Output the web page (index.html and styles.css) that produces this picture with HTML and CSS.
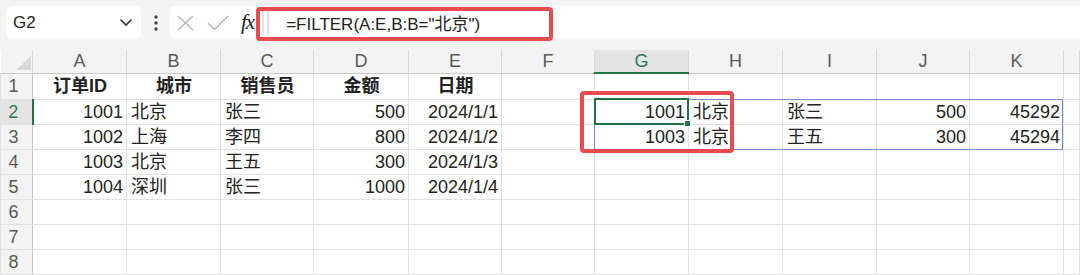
FILE: index.html
```html
<!DOCTYPE html>
<html lang="zh-CN">
<head>
    <meta charset="UTF-8">
    <meta name="viewport" content="width=device-width, initial-scale=1.0">
    <title>FILTER 示例</title>
    <link rel="stylesheet" href="styles.css">
</head>
<body>
    <div class="app">
        <!-- Name box + formula bar -->
        <div class="toolbar">
            <div class="name-box">
                <span>G2</span>
                <svg width="14" height="9" viewBox="0 0 14 9"><polyline points="1.5,1.5 7,7 12.5,1.5" fill="none" stroke="#333" stroke-width="1.6"/></svg>
            </div>
            <div class="more">
                <svg width="4" height="16" viewBox="0 0 4 16"><circle cx="2" cy="2" r="1.7" fill="#444"/><circle cx="2" cy="8" r="1.7" fill="#444"/><circle cx="2" cy="14" r="1.7" fill="#444"/></svg>
            </div>
            <div class="formula-box">
                <svg class="fx-btn cancel" width="17" height="16" viewBox="0 0 17 16"><path d="M1 1 L16 15 M16 1 L1 15" stroke="#b9b9b9" stroke-width="1.6" fill="none"/></svg>
                <svg class="fx-btn enter" width="22" height="16" viewBox="0 0 22 16"><polyline points="1,8 7.5,14.5 21,1" stroke="#b9b9b9" stroke-width="1.6" fill="none"/></svg>
                <i class="fx">fx</i>
                <span class="grip"></span>
                <span class="formula">=FILTER(A:E,B:B="北京")</span>
            </div>
        </div>

        <!-- Worksheet -->
        <div class="sheet">
            <table class="grid">
                <colgroup>
                    <col class="c-rh">
                    <col class="c94"><col class="c94"><col class="c93"><col class="c95"><col class="c93">
                    <col class="c93"><col class="c94"><col class="c94"><col class="c94"><col class="c93">
                    <col class="c94"><col>
                </colgroup>
                <tr class="col-heads">
                    <th class="corner"><span class="tri"></span></th>
                    <th>A</th><th>B</th><th>C</th><th>D</th><th>E</th><th>F</th>
                    <th class="sel">G</th><th>H</th><th>I</th><th>J</th><th>K</th><th></th>
                </tr>
                <tr class="first">
                    <td class="rh">1</td>
                    <td class="hd">订单ID</td><td class="hd">城市</td><td class="hd">销售员</td><td class="hd">金额</td><td class="hd">日期</td>
                    <td></td><td></td><td></td><td></td><td></td><td></td><td></td>
                </tr>
                <tr>
                    <td class="rh sel">2</td>
                    <td class="num">1001</td><td>北京</td><td>张三</td><td class="num">500</td><td class="num">2024/1/1</td>
                    <td></td>
                    <td class="num">1001</td><td>北京</td><td>张三</td><td class="num">500</td><td class="num">45292</td><td></td>
                </tr>
                <tr>
                    <td class="rh">3</td>
                    <td class="num">1002</td><td>上海</td><td>李四</td><td class="num">800</td><td class="num">2024/1/2</td>
                    <td></td>
                    <td class="num">1003</td><td>北京</td><td>王五</td><td class="num">300</td><td class="num">45294</td><td></td>
                </tr>
                <tr>
                    <td class="rh">4</td>
                    <td class="num">1003</td><td>北京</td><td>王五</td><td class="num">300</td><td class="num">2024/1/3</td>
                    <td></td><td></td><td></td><td></td><td></td><td></td><td></td>
                </tr>
                <tr>
                    <td class="rh">5</td>
                    <td class="num">1004</td><td>深圳</td><td>张三</td><td class="num">1000</td><td class="num">2024/1/4</td>
                    <td></td><td></td><td></td><td></td><td></td><td></td><td></td>
                </tr>
                <tr>
                    <td class="rh">6</td>
                    <td></td><td></td><td></td><td></td><td></td><td></td><td></td><td></td><td></td><td></td><td></td><td></td>
                </tr>
                <tr>
                    <td class="rh">7</td>
                    <td></td><td></td><td></td><td></td><td></td><td></td><td></td><td></td><td></td><td></td><td></td><td></td>
                </tr>
                <tr>
                    <td class="rh">8</td>
                    <td></td><td></td><td></td><td></td><td></td><td></td><td></td><td></td><td></td><td></td><td></td><td></td>
                </tr>
            </table>

            <!-- spill range, active cell, annotation -->
            <div class="spill"></div>
            <div class="active-cell"><span class="fill-handle"></span></div>
            <div class="mark mark-result"></div>
        </div>

        <div class="mark mark-formula"></div>
    </div>
</body>
</html>
```

FILE: styles.css
```css
/* Sheet page */
body {
    margin: 0;
    background: #fff;
    font-family: "Liberation Sans", "Noto Sans CJK SC", sans-serif;
    color: #222;
}

.app {
    position: relative;
    width: 1080px;
    height: 275px;
    overflow: hidden;
}

/* ---------- toolbar ---------- */
.toolbar {
    display: flex;
    align-items: flex-start;
    height: 50px;
    box-sizing: border-box;
    padding: 6px 0 0 6px;
    background: #f3f3f3;
}

.name-box {
    width: 135px;
    height: 33px;
    box-sizing: border-box;
    padding: 0 8px 0 7px;
    display: flex;
    align-items: center;
    justify-content: space-between;
    background: #fff;
    border-radius: 6px;
    font-size: 17px;
}

.more {
    width: 29px;
    height: 33px;
    display: flex;
    align-items: center;
    justify-content: center;
}

.formula-box {
    flex: 1;
    height: 33px;
    display: flex;
    align-items: center;
    background: #fff;
    border-radius: 6px 0 0 6px;
}

.fx-btn.cancel {
    margin-left: 7px;
}

.fx-btn.enter {
    margin-left: 13px;
}

.fx {
    margin-left: 12px;
    font-family: "Liberation Serif", serif;
    font-size: 21px;
    color: #222;
    letter-spacing: -1px;
}

.grip {
    width: 3px;
    height: 24px;
    margin-left: 8px;
    border-left: 2px solid #e2e2e2;
    border-right: 2px solid #e2e2e2;
}

.formula {
    margin-left: 17px;
    font-size: 17px;
    color: #222;
    white-space: pre;
}

/* ---------- grid ---------- */
.sheet {
    position: relative;
}

.grid {
    border-collapse: collapse;
    table-layout: fixed;
    width: 1080px;
    font-size: 18px;
}

.c-rh { width: 32px; }
.c93 { width: 93px; }
.c94 { width: 94px; }
.c95 { width: 95px; }

.grid td {
    height: 24px;
    padding: 0 3px 0 4px;
    border: 1px solid #e1e1e1;
    border-top: none;
    white-space: nowrap;
    overflow: hidden;
    line-height: 20px;
}

.grid tr.first td {
    height: 25px;
}

.col-heads th {
    height: 22px;
    padding: 0;
    background: #f3f3f3;
    color: #5a5a5a;
    font-weight: normal;
    font-size: 18px;
    line-height: 20px;
    border-right: 1px solid #dadada;
    border-bottom: 1px solid #c9c9c9;
}

.col-heads th.sel {
    background: #e3e3e3;
    color: #2e7d4f;
    border-bottom: 2px solid #217346;
}

.corner {
    position: relative;
}

.tri {
    position: absolute;
    right: 1px;
    bottom: 3px;
    width: 0;
    height: 0;
    border-left: 15px solid transparent;
    border-bottom: 14px solid #d8d8d8;
}

.grid td.rh {
    padding: 0 6px 0 0;
    text-align: center;
    background: #f3f3f3;
    color: #5a5a5a;
    border-right: 1px solid #c9c9c9;
}

.grid td.rh.sel {
    background: #e3e3e3;
    color: #2e7d4f;
    border-right: 2px solid #217346;
}

.hd {
    font-weight: bold;
    text-align: center;
}

.num {
    text-align: right;
}

/* ---------- overlays ---------- */
.spill {
    position: absolute;
    left: 594px;
    top: 49px;
    width: 469px;
    height: 51px;
    box-sizing: border-box;
    border: 1px solid #6f90d4;
}

.active-cell {
    position: absolute;
    left: 594px;
    top: 48px;
    width: 95px;
    height: 27px;
    box-sizing: border-box;
    border: 2px solid #217346;
}

.fill-handle {
    position: absolute;
    right: -4px;
    bottom: -4px;
    width: 5px;
    height: 5px;
    background: #217346;
    border: 1px solid #fff;
}

.mark {
    position: absolute;
    box-sizing: border-box;
    border: 4px solid #ea4b4e;
    border-radius: 4px;
}

.mark-result {
    left: 580px;
    top: 41px;
    width: 154px;
    height: 62px;
}

.mark-formula {
    left: 256px;
    top: 7px;
    width: 297px;
    height: 34px;
}
```
